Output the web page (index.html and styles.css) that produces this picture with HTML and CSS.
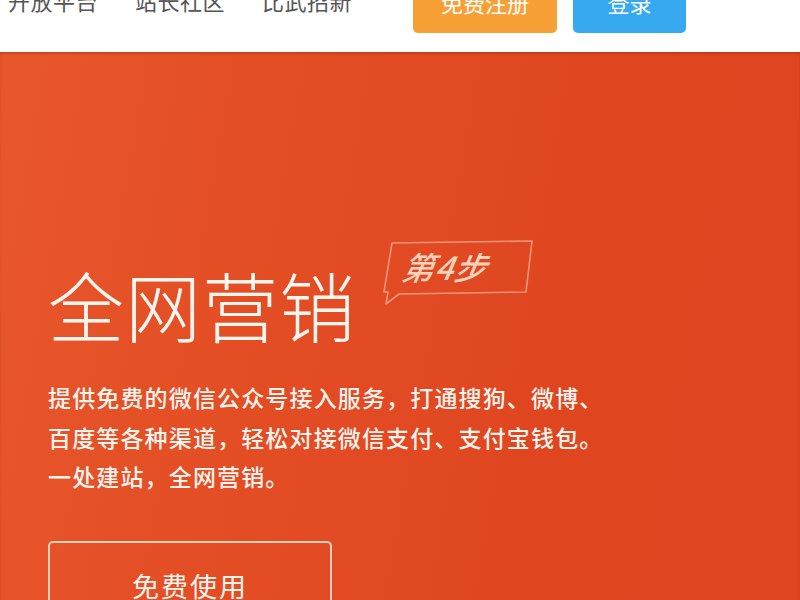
FILE: index.html
```html
<!DOCTYPE html>
<html lang="zh-CN">
<head>
<meta charset="utf-8">
<title>全网营销</title>
<link rel="stylesheet" href="styles.css">
</head>
<body>
<header class="topbar">
  <nav class="nav">
    <a class="nav-item" href="#">开放平台</a>
    <a class="nav-item" href="#">站长社区</a>
    <a class="nav-item" href="#">比武招新</a>
  </nav>
  <div class="actions">
    <a class="btn btn-register" href="#">免费注册</a>
    <a class="btn btn-login" href="#">登录</a>
  </div>
</header>
<main class="hero">
  <div class="title-row">
    <h1 class="title">全网营销</h1>
    <div class="badge">
      <svg class="badge-frame" width="152" height="66" viewBox="0 0 152 66">
        <path d="M11 3 L151 1 L145 52 L18 54 L5 64 L7 52 L3 52 Z" fill="none" stroke="rgba(255,214,190,0.55)" stroke-width="1.6" stroke-linejoin="round"/>
      </svg>
      <span class="badge-text">第4步</span>
    </div>
  </div>
  <p class="desc">提供免费的微信公众号接入服务，打通搜狗、微博、<br>百度等各种渠道，轻松对接微信支付、支付宝钱包。<br>一处建站，全网营销。</p>
  <a class="cta" href="#">免费使用</a>
</main>
</body>
</html>
```
FILE: styles.css
```css
html, body {
  margin: 0;
  padding: 0;
  height: 100%;
  overflow: hidden;
}
body {
  font-family: "Noto Sans CJK SC", "Liberation Sans", sans-serif;
  background: #df4620;
}
.topbar {
  height: 52px;
  background: #ffffff;
  display: flex;
  align-items: flex-start;
  overflow: visible;
}
.nav {
  display: flex;
  gap: 37px;
  padding-left: 8px;
  margin-top: -14px;
}
.nav-item {
  font-size: 22px;
  line-height: 28px;
  color: #555555;
  text-decoration: none;
  letter-spacing: 0.5px;
}
.actions {
  display: flex;
  gap: 16px;
  margin-left: 61px;
  margin-top: -19px;
}
.btn {
  display: flex;
  align-items: center;
  justify-content: center;
  height: 52px;
  border-radius: 5px;
  color: #ffffff;
  font-size: 22px;
  text-decoration: none;
  padding-bottom: 10px;
  box-sizing: border-box;
}
.btn-register {
  width: 144px;
  background: #f6a035;
}
.btn-login {
  width: 113px;
  background: #36a9f0;
}
.hero {
  height: 548px;
  box-sizing: border-box;
  padding: 214px 0 0 48px;
  background: linear-gradient(100deg, #e8572b 0%, #e34d24 35%, #df4620 70%, #de4520 100%);
  box-shadow: inset 0 2px 2px rgba(150, 40, 10, 0.35);
  color: #ffffff;
}
.title-row {
  display: flex;
  align-items: flex-start;
}
.title {
  margin: 0;
  font-size: 76px;
  line-height: 76px;
  font-weight: 200;
  letter-spacing: 1px;
  color: #fff6f0;
}
.badge {
  position: relative;
  width: 152px;
  height: 66px;
  margin-left: 25px;
  margin-top: -26px;
}
.badge-frame {
  display: block;
}
.badge-text {
  position: absolute;
  left: 22px;
  top: 7px;
  font-size: 32px;
  line-height: 38px;
  font-style: italic;
  font-weight: 500;
  letter-spacing: 1px;
  color: #fbd3bd;
  transform: skewX(-10deg);
}
.desc {
  margin: 36px 0 0;
  font-size: 23px;
  line-height: 39.5px;
  font-weight: 500;
  color: #fff3ee;
  letter-spacing: 1.15px;
}
.cta {
  display: flex;
  align-items: center;
  justify-content: center;
  width: 284px;
  height: 84px;
  margin-top: 44px;
  border: 2px solid rgba(255, 230, 215, 0.85);
  border-radius: 5px;
  box-sizing: border-box;
  color: #fff3ee;
  font-size: 27px;
  text-decoration: none;
  letter-spacing: 2px;
  padding-top: 6px;
}
```
